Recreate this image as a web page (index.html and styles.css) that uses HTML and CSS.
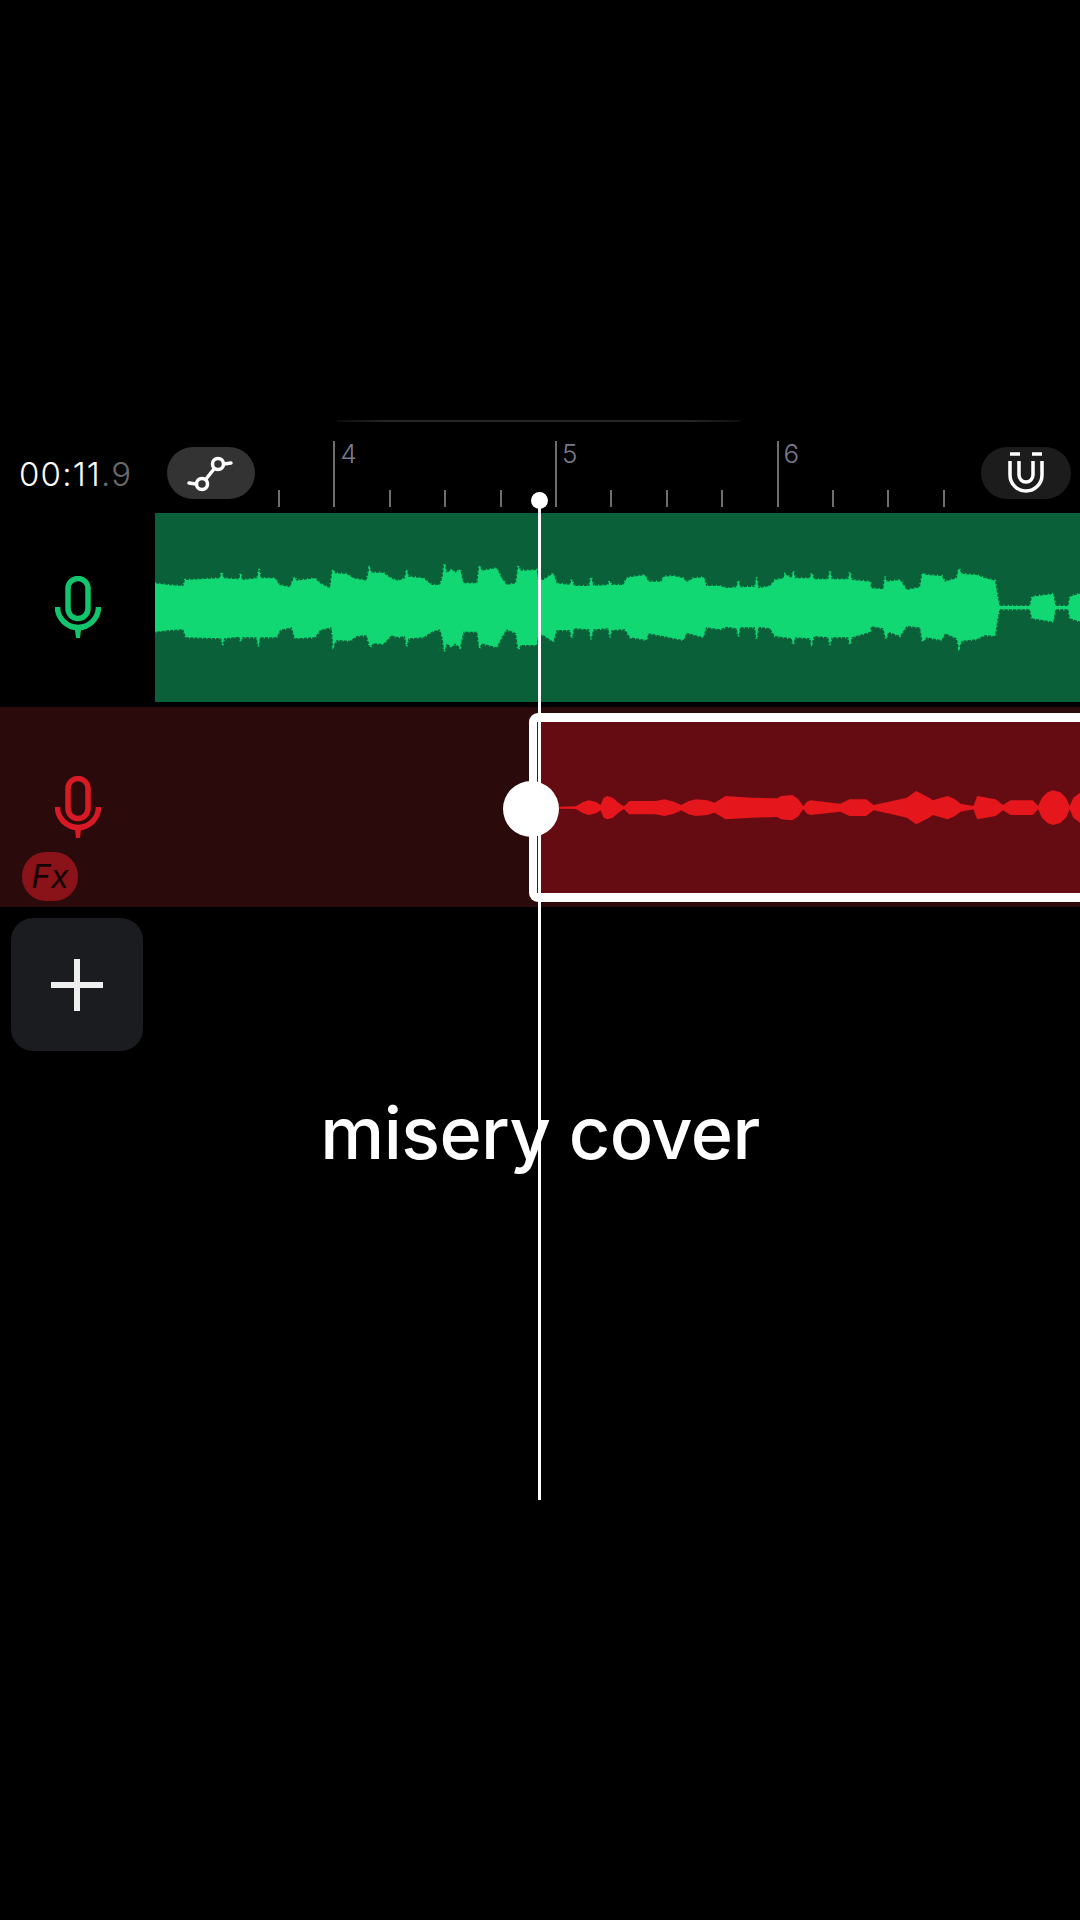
FILE: index.html
```html
<!DOCTYPE html>
<html>
<head>
    <title>misery cover</title>
    <link rel="stylesheet" href="styles.css">
</head>
<body>
    <div class="stage">
        <div class="top-line"></div>

        <div class="header">
            <div class="time">00:11<span class="dim">.9</span></div>
            <div class="pill pill-curve">
                <svg class="curve-icon" width="50" height="40" viewBox="0 0 50 40">
                    <circle cx="32" cy="11" r="5.5"/>
                    <circle cx="16" cy="31" r="5.5"/>
                    <path d="M38 11 L45 10 M10 31 L3 30 M28 16 L20 26"/>
                </svg>
            </div>
            <div class="ruler">
                <div class="beat"></div>
                <div class="beat bar"><span>4</span></div>
                <div class="beat"></div>
                <div class="beat"></div>
                <div class="beat"></div>
                <div class="beat bar"><span>5</span></div>
                <div class="beat"></div>
                <div class="beat"></div>
                <div class="beat"></div>
                <div class="beat bar"><span>6</span></div>
                <div class="beat"></div>
                <div class="beat"></div>
                <div class="beat last"></div>
            </div>
            <div class="pill pill-magnet">
                <svg class="magnet-icon" width="40" height="44" viewBox="0 0 40 44">
                    <path class="bars" d="M4 3 H14 M26 3 H36"/>
                    <path d="M4 10 V24 A16 16 0 0 0 36 24 V10"/>
                    <path d="M13 10 V24 A7 7 0 0 0 27 24 V10"/>
                </svg>
            </div>
        </div>

        <div class="track track-green">
            <div class="track-head">
                <svg class="mic" width="46" height="62" viewBox="0 0 46 62">
                    <rect x="13" y="2.5" width="20" height="40" rx="10"/>
                    <path d="M2.5 31 A20.5 20.5 0 0 0 43.5 31"/>
                    <polygon class="mic-stem" points="19.5,50 26.5,50 25,62 21,62"/>
                </svg>
            </div>
            <div class="clip-green">
                <svg class="wave" width="925" height="189" viewBox="0 0 925 189">
                    <g transform="translate(-5 37) scale(0.3333)">
                        <polygon points="15,100 60,106 100,108 105,90 150,88 210,85 215,65 220,85 268,88 272,68 276,90 322,85 327,57 332,85 375,85 388,105 420,112 433,80 440,92 495,85 510,100 540,115 548,58 555,70 590,72 610,85 650,92 658,55 665,68 700,68 722,85 722,258 700,282 670,280 660,292 650,255 620,258 600,272 560,270 550,288 545,232 510,240 495,262 435,265 425,232 390,240 380,262 330,262 325,290 320,262 276,262 272,275 268,260 222,265 218,285 214,265 108,262 100,238 60,240 15,245"/>
                    </g>
                    <g transform="translate(235 37) scale(0.3333)">
                        <polygon points="0,85 25,92 45,85 50,58 55,80 100,85 125,105 150,105 158,80 163,40 170,70 185,58 195,68 210,58 220,100 262,100 268,45 275,62 320,55 335,85 350,105 378,100 385,48 392,62 440,60 445,90 460,90 490,70 500,100 540,105 545,88 552,108 598,108 603,80 610,108 655,105 658,92 665,105 700,105 710,85 722,82 722,265 705,238 665,240 660,262 655,235 610,238 603,268 598,238 552,235 545,265 540,240 500,240 490,275 460,255 445,255 440,285 392,285 385,300 378,250 350,238 335,262 320,292 275,280 268,295 262,245 220,245 210,292 195,280 185,292 170,280 163,305 158,265 150,238 125,245 100,262 55,265 50,290 45,258 25,262 0,255"/>
                    </g>
                    <g transform="translate(475 37) scale(0.3333)">
                        <polygon points="0,82 45,75 55,95 95,95 100,80 130,78 160,85 170,97 190,85 222,82 228,108 270,108 290,115 320,112 325,90 330,112 375,110 380,82 385,115 420,108 435,90 460,85 465,72 485,85 490,62 495,85 540,85 545,68 552,88 595,88 600,60 605,88 655,88 660,65 665,90 722,95 722,245 665,262 660,285 655,262 605,262 600,285 595,262 552,258 545,280 540,265 495,262 490,285 485,265 435,258 420,235 385,230 380,268 375,232 330,232 325,260 320,235 290,230 270,238 228,232 220,262 170,248 160,270 130,265 100,258 55,250 50,270 0,262"/>
                    </g>
                    <g transform="translate(715 37) scale(0.3333)">
                        <polygon points="0,115 40,118 45,80 50,95 90,90 110,120 150,112 157,70 170,75 215,78 225,95 260,85 267,55 275,72 320,75 345,85 375,92 382,135 388,168 480,168 486,140 550,132 556,168 595,168 600,140 632,130 632,215 600,205 595,178 556,178 550,215 486,205 480,178 388,178 382,210 375,258 345,255 320,268 275,272 267,293 260,265 225,250 215,270 170,262 158,275 150,232 110,228 90,258 55,245 48,268 40,235 0,228"/>
                    </g>
                </svg>
            </div>
        </div>

        <div class="track track-red">
            <div class="track-head">
                <svg class="mic" width="46" height="62" viewBox="0 0 46 62">
                    <rect x="13" y="2.5" width="20" height="40" rx="10"/>
                    <path d="M2.5 31 A20.5 20.5 0 0 0 43.5 31"/>
                    <polygon class="mic-stem" points="19.5,50 26.5,50 25,62 21,62"/>
                </svg>
                <div class="fx">Fx</div>
            </div>
            <div class="lane">
                <div class="clip-red">
                    <svg class="wave" viewBox="100 65 1468 513" preserveAspectRatio="none">
                        <polygon points="160,319 205,318 225,305 240,300 260,305 272,314 280,292 290,287 305,292 320,307 335,318 345,307 350,302 420,302 445,297 470,304 490,314 510,302 530,297 560,300 580,307 610,287 680,292 750,294 760,287 790,284 805,295 810,302 820,318 830,304 840,300 920,310 945,297 990,297 1010,314 1060,302 1100,292 1125,272 1160,292 1170,300 1210,287 1230,297 1245,310 1280,317 1290,287 1340,297 1360,314 1380,300 1440,300 1455,317 1465,292 1480,276 1495,270 1515,276 1530,292 1540,317 1550,292 1568,277 1568,367 1550,352 1540,327 1530,352 1515,368 1495,374 1480,368 1465,352 1455,327 1440,344 1380,344 1360,330 1340,347 1290,357 1280,327 1245,334 1230,347 1210,357 1170,344 1160,352 1125,372 1100,352 1060,342 1010,330 990,347 945,347 920,334 840,344 830,340 820,326 810,342 805,349 790,360 760,357 750,350 680,352 610,357 580,337 560,344 530,347 510,342 490,330 470,340 445,347 420,342 350,342 345,337 335,326 320,337 305,352 290,357 280,352 272,330 260,339 240,344 225,339 205,326 160,325"/>
                    </svg>
                    <div class="handle"></div>
                </div>
            </div>
        </div>

        <div class="add-btn">
            <svg width="52" height="52" viewBox="0 0 52 52">
                <path d="M26 0 V52 M0 26 H52"/>
            </svg>
        </div>

        <div class="caption">misery cover</div>

        <div class="playhead"></div>
    </div>
</body>
</html>
```

FILE: styles.css
```css
body {
    margin: 0;
    background: #000;
    font-family: Inter, "Liberation Sans", sans-serif;
    color: white;
}

.stage {
    position: relative;
    width: 1080px;
    height: 1920px;
    padding-top: 420px;
    box-sizing: border-box;
    overflow: hidden;
}

.top-line {
    width: 404px;
    height: 2px;
    margin: 0 0 19px 337px;
    background: linear-gradient(90deg, #0c0c0c, #262626 12%, #262626 88%, #0c0c0c);
}

/* header row */
.header {
    display: flex;
    height: 68px;
    margin-bottom: 4px;
}

.time {
    width: 167px;
    padding-left: 19px;
    box-sizing: border-box;
    font-size: 33px;
    font-weight: 300;
    letter-spacing: 1.2px;
    line-height: 66px;
    white-space: nowrap;
}

.dim {
    color: #6a6a6a;
}

.pill {
    display: flex;
    align-items: center;
    justify-content: center;
    height: 52px;
    margin-top: 6px;
    border-radius: 26px;
}

.pill-curve {
    width: 88px;
    background: #333;
}

.pill-magnet {
    width: 90px;
    margin-left: auto;
    margin-right: 9px;
    background: #1c1c1c;
}

.curve-icon circle,
.curve-icon path {
    fill: none;
    stroke: white;
    stroke-width: 3.5;
    stroke-linecap: round;
}

.magnet-icon path {
    fill: none;
    stroke: white;
    stroke-width: 3.5;
}

.ruler {
    display: flex;
    margin-left: 23px;
    align-items: flex-end;
    height: 66px;
}

.beat {
    position: relative;
    width: 55.4px;
    height: 17px;
    box-sizing: border-box;
    border-left: 2px solid #6e6e6e;
}

.beat.bar {
    height: 66px;
}

.beat.last {
    width: 2px;
}

.beat span {
    position: absolute;
    top: -2px;
    left: 5px;
    font-size: 26px;
    line-height: 30px;
    font-weight: 300;
    color: #7a7a8e;
}

/* tracks */
.track {
    display: flex;
}

.track-green {
    height: 189px;
    margin-bottom: 5px;
}

.track-red {
    height: 200px;
    background: #2b0a0b;
}

.track-head {
    position: relative;
    display: flex;
    align-items: center;
    justify-content: center;
    flex: none;
    width: 155px;
}

.mic {
    margin-top: -1px;
}

.mic rect,
.mic path {
    fill: none;
    stroke-width: 5.5;
}

.track-green .mic rect,
.track-green .mic path {
    stroke: #12c46c;
}

.track-green .mic-stem {
    fill: #12c46c;
}

.track-red .mic rect,
.track-red .mic path {
    stroke: #d81a26;
}

.track-red .mic-stem {
    fill: #d81a26;
}

.clip-green {
    flex: 1;
    background: #0a6038;
    overflow: hidden;
}

.clip-green .wave {
    display: block;
    fill: #12d873;
    stroke: #12d873;
    stroke-width: 7;
    stroke-dasharray: 3 10;
    filter: blur(0.5px);
}

.lane {
    flex: 1;
    padding: 6px 0 0 374px;
}

.clip-red {
    position: relative;
    height: 171px;
    background: #650c12;
    border: solid white;
    border-width: 9px 0 9px 8px;
    border-radius: 9px 0 0 9px;
}

.clip-red .wave {
    display: block;
    width: 100%;
    height: 100%;
    fill: #e5161c;
    filter: blur(0.5px);
}

.handle {
    position: absolute;
    top: 59px;
    left: -34px;
    width: 56px;
    height: 56px;
    border-radius: 50%;
    background: white;
}

.fx {
    position: absolute;
    left: 22px;
    top: 145px;
    width: 56px;
    height: 49px;
    border-radius: 24px;
    background: #8a1219;
    color: #150303;
    font-size: 33px;
    font-style: italic;
    line-height: 49px;
    text-align: center;
}

.add-btn {
    display: flex;
    align-items: center;
    justify-content: center;
    width: 132px;
    height: 133px;
    margin: 11px 0 0 11px;
    border-radius: 22px;
    background: #1b1c1f;
}

.add-btn path {
    fill: none;
    stroke: #eee;
    stroke-width: 6;
}

.caption {
    margin-top: 37px;
    font-size: 72px;
    font-weight: 500;
    letter-spacing: -0.6px;
    line-height: 90px;
    text-align: center;
}

.playhead {
    position: absolute;
    left: 538px;
    top: 500px;
    width: 3px;
    height: 1000px;
    background: white;
}

.playhead::before {
    content: "";
    position: absolute;
    top: -8px;
    left: -7px;
    width: 17px;
    height: 17px;
    border-radius: 50%;
    background: white;
}
```
